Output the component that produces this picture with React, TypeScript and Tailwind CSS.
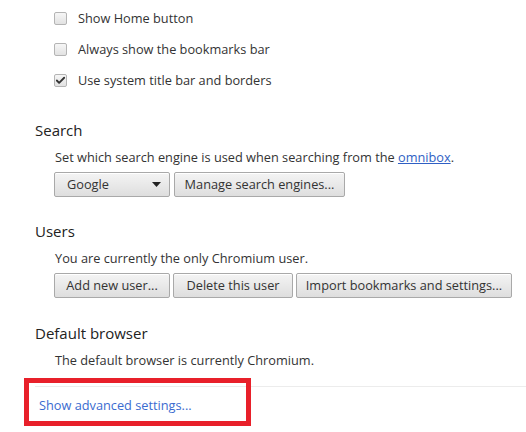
import { Check } from 'lucide-react';

const font = { fontFamily: '"Open Sans", "Liberation Sans", sans-serif' };

const Checkbox = ({ checked, label }: { checked?: boolean; label: string }) => (
  <div className="flex h-[31px] items-center">
    <div className="ml-[54px] flex h-[13px] w-[13px] items-center justify-center rounded-[2px] border border-[#b4b4b4] bg-gradient-to-b from-[#f6f6f6] to-[#e2e2e2]">
      {checked && <Check className="h-[11px] w-[11px] text-[#333]" strokeWidth={4} />}
    </div>
    <span className="ml-[11px] text-[12.75px] text-[#333]">{label}</span>
  </div>
);

const Button = ({ label, width }: { label: string; width: string }) => (
  <button
    className={`h-[25px] ${width} rounded-[2px] border border-[#a9a9a9] bg-gradient-to-b from-[#f4f4f4] to-[#dedede] text-[12.75px] text-[#333] shadow-[inset_0_1px_0_#fff]`}
  >
    {label}
  </button>
);

const Section = ({ title, children }: { title: string; children: React.ReactNode }) => (
  <div>
    <h3 className="ml-[35px] h-[20px] text-[15px] leading-[20px] font-medium text-[#222]">{title}</h3>
    <div className="mt-[7px]">{children}</div>
  </div>
);

export default function App() {
  return (
    <div className="relative h-[432px] w-[526px] overflow-hidden bg-white" style={font}>
      <div className="pt-[3px]">
        <Checkbox label="Show Home button" />
        <Checkbox label="Always show the bookmarks bar" />
        <Checkbox checked label="Use system title bar and borders" />
      </div>

      <div className="mt-[24px]">
        <Section title="Search">
          <p className="ml-[55px] h-[20px] text-[12.75px] leading-[20px] text-[#333]">
            Set which search engine is used when searching from the{' '}
            <span className="text-[#2f5fc4] underline">omnibox</span>.
          </p>
          <div className="mt-[5px] ml-[54px] flex gap-[4px]">
            <div className="flex h-[25px] w-[116px] items-center justify-between rounded-[2px] border border-[#a9a9a9] bg-gradient-to-b from-[#f4f4f4] to-[#dedede] pr-[8px] pl-[12px] text-[12.75px] text-[#333] shadow-[inset_0_1px_0_#fff]">
              <span>Google</span>
              <svg width="9" height="5" viewBox="0 0 9 5">
                <path d="M0 0h9L4.5 5z" fill="#222" />
              </svg>
            </div>
            <Button label="Manage search engines..." width="w-[171px]" />
          </div>
        </Section>
      </div>

      <div className="mt-[24px]">
        <Section title="Users">
          <p className="ml-[55px] h-[20px] text-[12.75px] leading-[20px] text-[#333]">
            You are currently the only Chromium user.
          </p>
          <div className="mt-[5px] ml-[54px] flex gap-[3px]">
            <Button label="Add new user..." width="w-[116px]" />
            <Button label="Delete this user" width="w-[120px]" />
            <Button label="Import bookmarks and settings..." width="w-[216px]" />
          </div>
        </Section>
      </div>

      <div className="mt-[25px]">
        <Section title="Default browser">
          <p className="ml-[55px] h-[20px] text-[12.75px] leading-[20px] text-[#333]">
            The default browser is currently Chromium.
          </p>
        </Section>
      </div>

      <div className="mt-[16px] ml-[35px] border-t border-[#ececec]" />
      <div className="mt-[8px] ml-[39px] text-[12.75px] leading-[20px] text-[#3a6bd0]">Show advanced settings...</div>

      {/* red highlight box drawn over the page */}
      <div className="absolute top-[378px] left-[24px] h-[48px] w-[227px] border-[5px] border-[#e8202a]" />
    </div>
  );
}
